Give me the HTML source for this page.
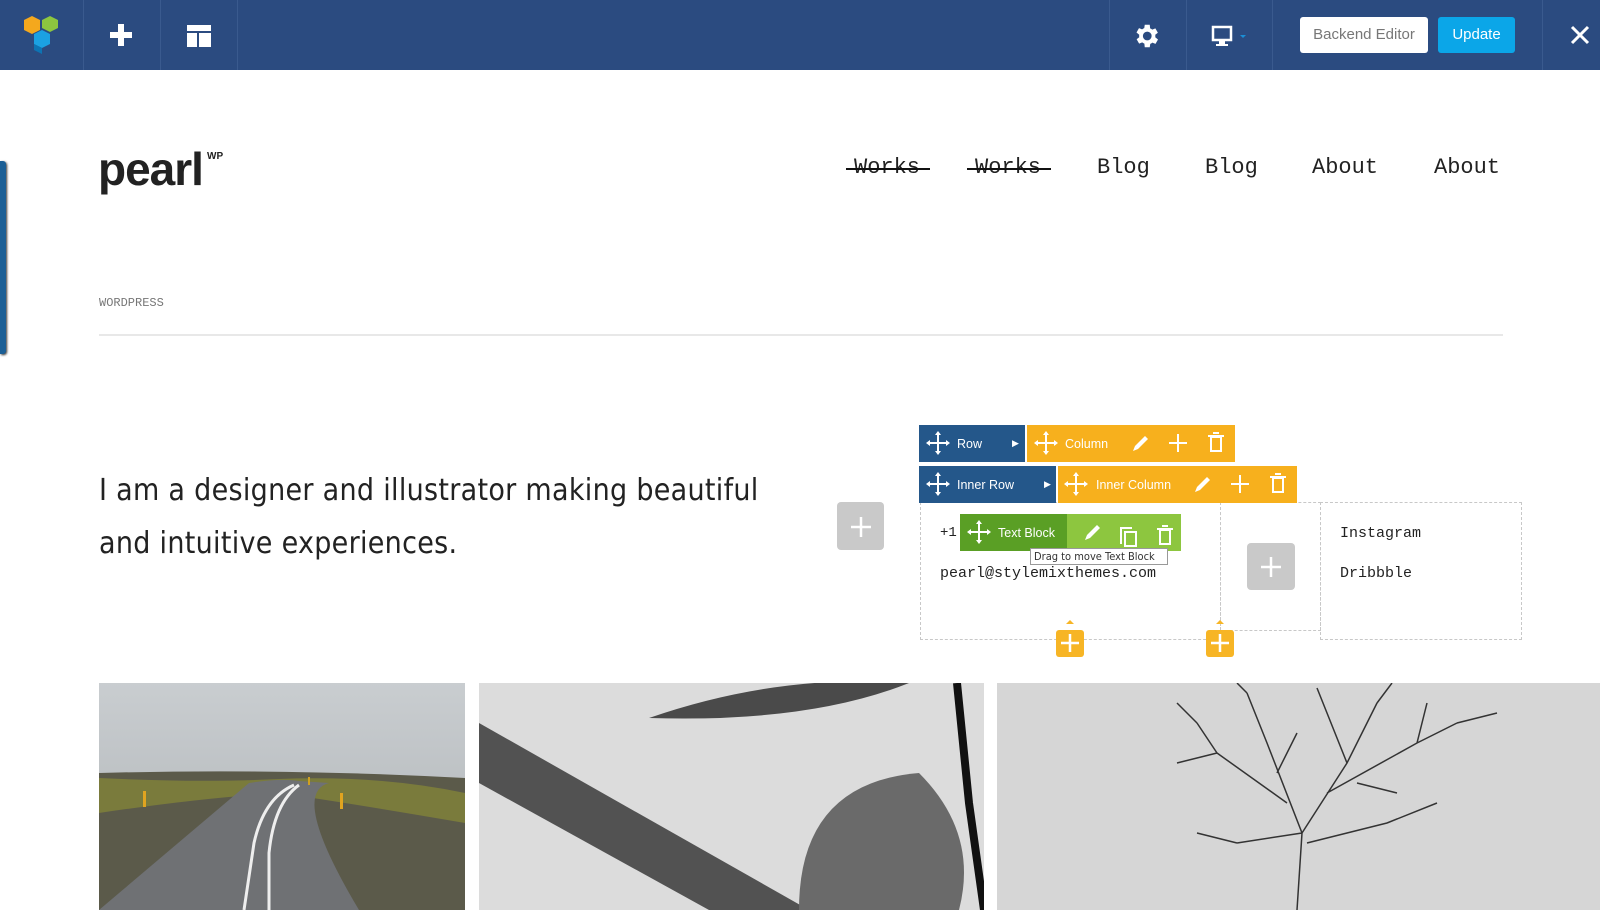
<!DOCTYPE html>
<html><head><meta charset="utf-8"><style>
*{margin:0;padding:0;box-sizing:border-box}
body{width:1600px;height:910px;overflow:hidden;background:#fff;position:relative;font-family:"Liberation Sans",sans-serif}
.a{position:absolute}
.nav{left:0;top:0;width:1600px;height:70px;background:#2b4b80}
.sep{top:0;width:1px;height:70px;background:#3a5a8e}
.mono{font-family:"Liberation Mono","DejaVu Sans Mono",monospace}
.menu{top:155px;font-size:22px;color:#222}
.st{position:absolute;left:-8px;right:-10px;top:13px;height:2px;background:#111}
.bar{height:37px;color:#fff;font-size:12.5px;display:flex;align-items:center}
.dash{border:1px dashed #c8c8c8}
.gplus{background:#c9c9c9;border-radius:4px}
.oplus{background:#f7b525;border-radius:3px;width:28px;height:27px}
</style></head><body>
<div class="a nav"></div>
<div class="a sep" style="left:83px"></div><div class="a sep" style="left:160px"></div><div class="a sep" style="left:237px"></div>
<div class="a sep" style="left:1109px"></div><div class="a sep" style="left:1186px"></div><div class="a sep" style="left:1272px"></div><div class="a sep" style="left:1542px"></div>
<svg class="a" style="left:22px;top:14px" width="38" height="40" viewBox="0 0 38 40">
<polygon points="2,6 10,2 18,6 18,16 10,20 2,16" fill="#f4a81d"/><polygon points="20,6 28,2 36,6 36,14 28,18 20,14" fill="#8dc63f"/><polygon points="12,20 20,16 28,20 28,30 20,34 12,30" fill="#1ba1e2"/><polygon points="12,30 20,34 20,40 12,36" fill="#0d74b4"/></svg>
<svg class="a" style="left:110px;top:24px" width="22" height="22"><rect x="8" y="0" width="6" height="22" fill="#fff"/><rect x="0" y="8" width="22" height="6" fill="#fff"/></svg>
<svg class="a" style="left:187px;top:25px" width="24" height="22"><rect x="0" y="0" width="24" height="6" fill="#fff"/><rect x="0" y="8" width="10" height="14" fill="#fff"/><rect x="12" y="8" width="12" height="14" fill="#fff"/></svg>
<svg class="a" style="left:1131px;top:21px" width="30" height="30" viewBox="0 0 24 24"><path fill="#fff" d="M19.4 13a7.5 7.5 0 0 0 0-2l2.1-1.6-2-3.5-2.5 1a7 7 0 0 0-1.7-1L15 3h-4l-.4 2.7a7 7 0 0 0-1.7 1l-2.5-1-2 3.5L6.6 11a7.5 7.5 0 0 0 0 2l-2.1 1.6 2 3.5 2.5-1a7 7 0 0 0 1.7 1L11 21h4l.4-2.7a7 7 0 0 0 1.7-1l2.5 1 2-3.5zM13 15.5a3.5 3.5 0 1 1 0-7 3.5 3.5 0 0 1 0 7z"/></svg>
<svg class="a" style="left:1211px;top:25px" width="36" height="22"><rect x="2" y="2" width="18" height="13" fill="none" stroke="#fff" stroke-width="2.5"/><rect x="8" y="16" width="6" height="3" fill="#fff"/><rect x="5" y="19" width="12" height="2" fill="#fff"/><polygon points="29,10 35,10 32,13" fill="#1b8fd6"/></svg>
<div class="a" style="left:1300px;top:17px;width:128px;height:36px;background:#fff;border-radius:3px;color:#777;font-size:15px;text-align:center;line-height:36px">Backend Editor</div>
<div class="a" style="left:1438px;top:17px;width:77px;height:36px;background:#0ba6e8;border-radius:3px;color:#fff;font-size:15px;text-align:center;line-height:36px">Update</div>
<svg class="a" style="left:1570px;top:25px" width="20" height="20"><path d="M2 2L18 18M18 2L2 18" stroke="#fff" stroke-width="3"/></svg>
<div class="a" style="left:0;top:161px;width:6px;height:193px;background:#1b5f96;border-radius:0 3px 3px 0;box-shadow:1px 1px 2px #333"></div>

<div class="a" style="left:98px;top:142px;font-size:46px;font-weight:bold;color:#222;letter-spacing:-1px">pearl</div>
<div class="a" style="left:207px;top:151px;font-size:10px;font-weight:bold;color:#222">WP</div>
<div class="a mono menu" style="left:854px">Works<div class="st"></div></div>
<div class="a mono menu" style="left:975px">Works<div class="st"></div></div>
<div class="a mono menu" style="left:1097px">Blog</div>
<div class="a mono menu" style="left:1205px">Blog</div>
<div class="a mono menu" style="left:1312px">About</div>
<div class="a mono menu" style="left:1434px">About</div>
<div class="a mono" style="left:99px;top:296px;font-size:12px;color:#777">WORDPRESS</div>
<div class="a" style="left:99px;top:334px;width:1404px;height:2px;background:#e8e8e8"></div>
<div class="a" style="left:99px;top:464px;font-size:30px;line-height:53px;color:#222;font-family:'DejaVu Sans Condensed','Liberation Sans Narrow',sans-serif;width:720px;letter-spacing:0.3px">I am a designer and illustrator making beautiful<br>and intuitive experiences.</div>
<div class="a gplus" style="left:837px;top:502px;width:47px;height:48px"></div>
<svg class="a" style="left:850px;top:516px" width="22" height="22"><path d="M11 1V21M1 11H21" stroke="#fff" stroke-width="2.5"/></svg>

<div class="a dash" style="left:920px;top:502px;width:301px;height:138px"></div>
<div class="a dash" style="left:1220px;top:502px;width:101px;height:129px"></div>
<div class="a dash" style="left:1320px;top:502px;width:202px;height:138px"></div>

<div class="a bar" style="left:919px;top:425px;width:106px;background:#24578a;padding-left:38px">Row<span style="margin-left:30px;font-size:9px">▶</span></div>
<div class="a bar" style="left:1027px;top:425px;width:208px;background:#f7b01d;padding-left:38px">Column</div>
<div class="a bar" style="left:919px;top:466px;width:137px;background:#24578a;padding-left:38px">Inner Row<span style="margin-left:30px;font-size:9px">▶</span></div>
<div class="a bar" style="left:1058px;top:466px;width:239px;background:#f7b01d;padding-left:38px">Inner Column</div>
<div class="a mono" style="left:940px;top:525px;font-size:14px;color:#222">+1</div>
<div class="a bar" style="left:960px;top:514px;width:107px;background:#5a9f25;padding-left:38px">Text Block</div>
<div class="a bar" style="left:1067px;top:514px;width:114px;background:#8dc63f"></div>
<svg class="a" style="left:0;top:0" width="1600" height="700">
<g stroke="#fff" stroke-width="2" fill="#fff">
<g id="mv"><path d="M938 434v18M929 443h18" /><path d="M938 431l-3 4h6zM938 455l-3-4h6zM926 443l4-3v6zM950 443l-4-3v6z" stroke="none"/></g>
<use href="#mv" x="108"/><use href="#mv" y="41"/><use href="#mv" x="138" y="41"/><use href="#mv" x="41" y="89"/>
<g id="ic"><path d="M1133 451l2-5 10-10 3 3-10 10z" stroke="none"/><path d="M1178 434v18M1169 443h18"/><rect x="1211" y="437" width="10" height="14" fill="none"/><path d="M1208 436h16M1213 433h6"/></g>
<use href="#ic" x="62" y="41"/>
<path d="M1085 540l2-5 10-10 3 3-10 10z" stroke="none"/>
<rect x="1125" y="532" width="11" height="14" fill="none"/><path d="M1121 544v-16h11" fill="none"/>
<rect x="1160" y="530" width="10" height="14" fill="none"/><path d="M1157 529h16M1162 526h6"/>
</g></svg>
<div class="a" style="left:1030px;top:548px;width:138px;height:17px;background:#fff;border:1px solid #999;font-size:11px;color:#333;line-height:15px;padding-left:3px;font-family:'DejaVu Sans Condensed',sans-serif">Drag to move Text Block</div>
<div class="a mono" style="left:940px;top:565px;font-size:15px;color:#222">pearl@stylemixthemes.com</div>
<div class="a gplus" style="left:1247px;top:543px;width:48px;height:47px"></div>
<svg class="a" style="left:1260px;top:556px" width="22" height="22"><path d="M11 1V21M1 11H21" stroke="#fff" stroke-width="2.5"/></svg>
<div class="a mono" style="left:1340px;top:525px;font-size:15px;color:#222">Instagram</div>
<div class="a mono" style="left:1340px;top:565px;font-size:15px;color:#222">Dribbble</div>
<div class="a oplus" style="left:1056px;top:630px"></div><div class="a oplus" style="left:1206px;top:630px"></div>
<svg class="a" style="left:0;top:600px" width="1600" height="60"><polygon points="1070,20 1066,24 1074,24" fill="#f7b525"/><polygon points="1220,20 1216,24 1224,24" fill="#f7b525"/><path d="M1070 34v18M1061 43h18M1220 34v18M1211 43h18" stroke="#fff" stroke-width="2.5"/></svg>

<svg class="a" style="left:99px;top:683px" width="366" height="227"><defs><linearGradient id="s1" x1="0" y1="0" x2="0" y2="1"><stop offset="0" stop-color="#c9cdd0"/><stop offset="1" stop-color="#aeb3b6"/></linearGradient></defs>
<rect width="366" height="227" fill="url(#s1)"/><path d="M0 90 Q180 85 366 95 V227 H0z" fill="#5b5a4a"/><path d="M0 95 Q100 100 180 96 Q280 92 366 110 V140 Q250 120 180 110 Q100 115 0 130z" fill="#7a7b3c"/>
<path d="M0 227 L150 100 Q180 95 200 98 L230 100 Q190 110 260 227z" fill="#6f7174"/><path d="M145 227 L155 160 Q165 115 195 102" stroke="#eee" stroke-width="3" fill="none"/><path d="M170 227 L170 170 Q175 120 200 102" stroke="#eee" stroke-width="3" fill="none"/>
<rect x="44" y="108" width="3" height="16" fill="#e0a420"/><rect x="241" y="110" width="3" height="16" fill="#e0a420"/><rect x="209" y="94" width="2" height="8" fill="#d0a020"/></svg>
<svg class="a" style="left:479px;top:683px" width="505" height="227">
<rect width="505" height="227" fill="#dcdcdc"/><path d="M0 40 L330 227 L230 227 L0 100z" fill="#3a3a3a" opacity="0.85"/><path d="M170 35 Q300 -10 430 0 Q330 40 170 35z" fill="#4a4a4a"/><path d="M320 227 Q320 100 440 90 Q500 150 480 227z" fill="#6a6a6a"/><path d="M478 0 L490 120 L505 227" stroke="#111" stroke-width="8" fill="none"/></svg>
<svg class="a" style="left:997px;top:683px" width="603" height="227"><rect width="603" height="227" fill="#d6d6d6"/>
<g stroke="#333" fill="none" stroke-width="1.5"><path d="M300 227 L305 150 L270 60 M305 150 L350 80 L380 20 M290 120 L220 70 M330 110 L420 60 M270 60 L250 10 M350 80 L330 30 M220 70 L200 40 M420 60 L460 40 M305 150 L240 160 M310 160 L390 140 M250 10 L240 0 M380 20 L395 0 M460 40 L500 30 M200 40 L180 20 M240 160 L200 150 M390 140 L440 120 M330 30 L320 5 M220 70 L180 80 M420 60 L430 20 M280 90 L300 50 M360 100 L400 110"/></g></svg>
</body></html>
